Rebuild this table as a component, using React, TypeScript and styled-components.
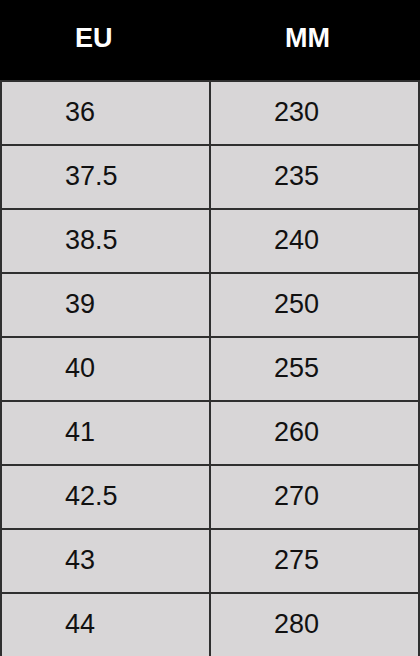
import React from 'react';
import styled, { createGlobalStyle } from 'styled-components';

const GlobalStyle = createGlobalStyle`
  html, body {
    margin: 0;
    padding: 0;
    background: #ffffff;
  }
  body {
    font-family: "Liberation Sans", Arial, sans-serif;
  }
`;

const Table = styled.div`
  width: 420px;
  display: flex;
  flex-direction: column;
`;

const HeadRow = styled.div`
  display: grid;
  grid-template-columns: 1fr 1fr;
  height: 80px;
  background: #000000;
`;

const HeadCell = styled.div`
  display: flex;
  align-items: center;
  padding: 0 0 4px 75px;
  color: #ffffff;
  font-size: 27px;
  font-weight: 700;
`;

const Row = styled.div`
  display: grid;
  grid-template-columns: 209px 211px;
  height: 64px;
  box-sizing: border-box;
  border-top: 2px solid #2f2f2f;
`;

const Cell = styled.div<{ $last?: boolean }>`
  display: flex;
  align-items: center;
  box-sizing: border-box;
  padding: 0 0 2px 63px;
  background: #d8d6d7;
  border-left: 2px solid #2f2f2f;
  border-right: ${(p) => (p.$last ? '2px solid #2f2f2f' : 'none')};
  color: #111111;
  font-size: 27px;
`;

const sizes: [string, string][] = [
  ['36', '230'],
  ['37.5', '235'],
  ['38.5', '240'],
  ['39', '250'],
  ['40', '255'],
  ['41', '260'],
  ['42.5', '270'],
  ['43', '275'],
  ['44', '280'],
];

export default function App() {
  return (
    <>
      <GlobalStyle />
      <Table>
        <HeadRow>
          <HeadCell>EU</HeadCell>
          <HeadCell>MM</HeadCell>
        </HeadRow>
        {sizes.map(([eu, mm]) => (
          <Row key={eu}>
            <Cell>{eu}</Cell>
            <Cell $last>{mm}</Cell>
          </Row>
        ))}
      </Table>
    </>
  );
}
